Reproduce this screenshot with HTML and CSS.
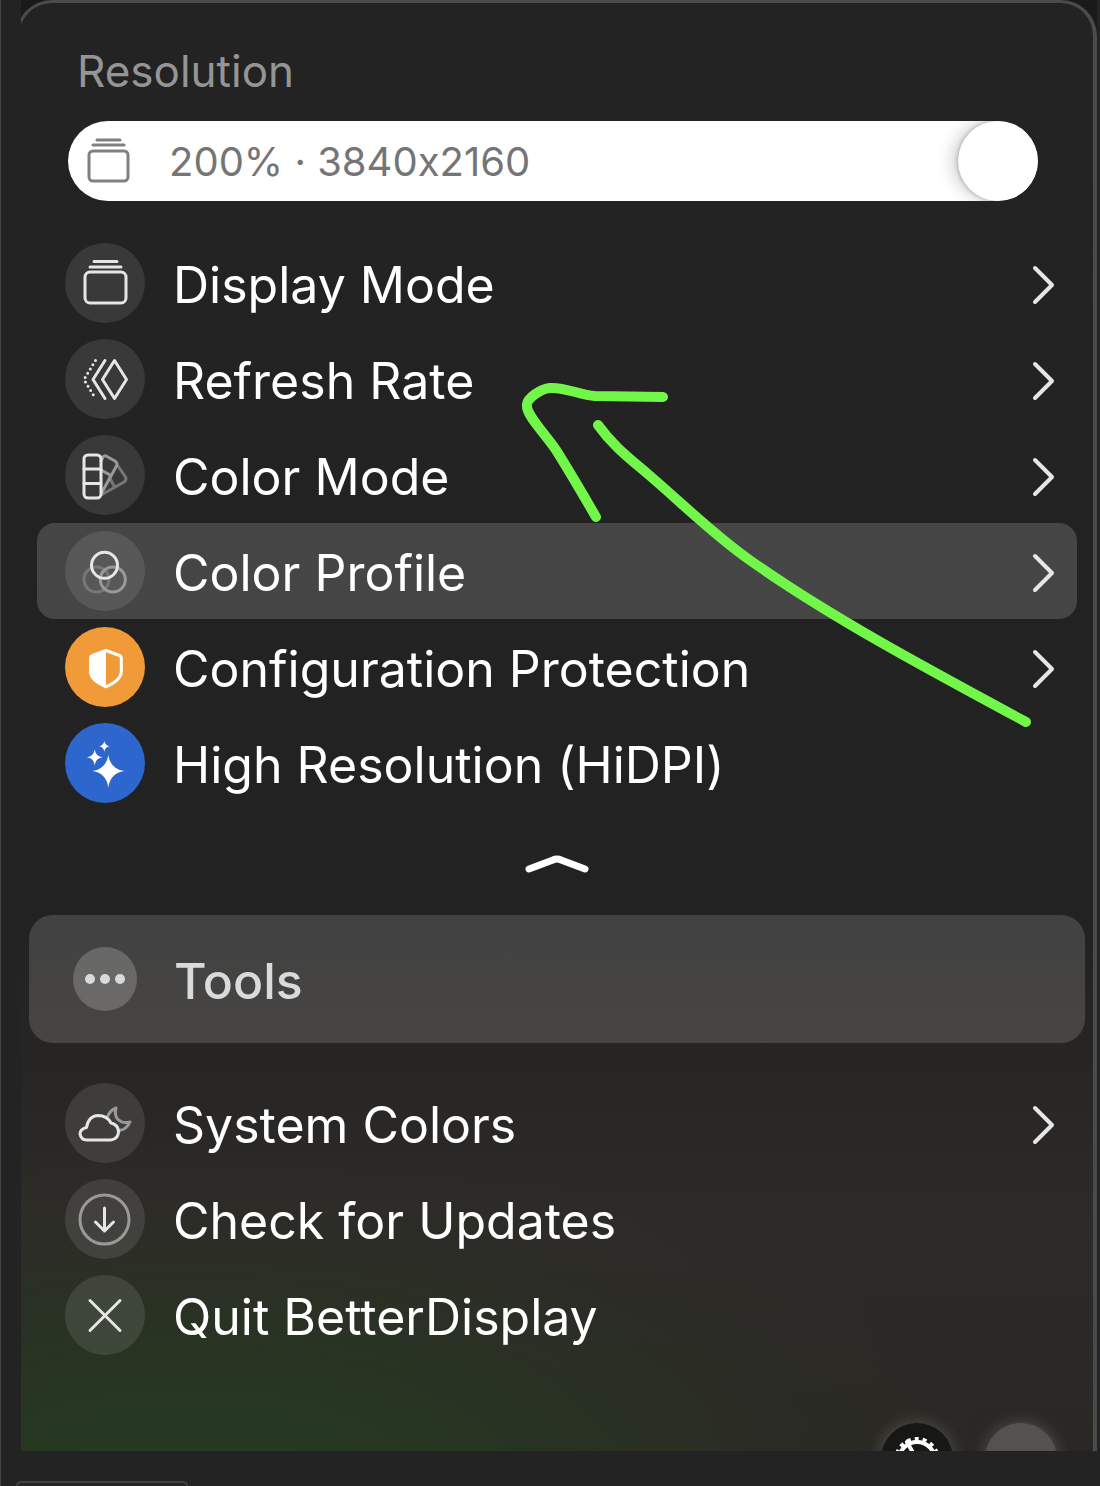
FILE: index.html
```
<!doctype html>
<html lang="en">

<head>
    <meta charset="UTF-8">
    <meta name="viewport" content="width=device-width, initial-scale=1">
    <title>BetterDisplay</title>
    <link rel="stylesheet" href="styles.css">
</head>

<body>
    <div class="page">
        <div class="frame">
            <main class="panel">
                <section class="resolution">
                    <label class="title" for="resolution">Resolution</label>
                    <div class="slider">
                        <input type="range" id="resolution" min="0" max="100" value="100">
                        <div class="slider_text">
                            <svg class="icon" viewBox="0 0 80 80">
                                <rect x="21" y="30" width="39" height="30" rx="4" />
                                <path d="M25 24H56M29 19H52" />
                            </svg>
                            <span>200% · 3840x2160</span>
                        </div>
                    </div>
                </section>

                <ul class="menu">
                    <li>
                        <button type="button" class="item">
                            <svg class="icon" viewBox="0 0 80 80">
                                <rect x="20" y="29" width="41" height="31" rx="5" />
                                <path d="M25 24H56M29 18.5H52" />
                            </svg>
                            <span>Display Mode</span>
                            <svg class="arrow" viewBox="0 0 24 40"><path d="M4 3L21 20L4 37" /></svg>
                        </button>
                    </li>
                    <li>
                        <button type="button" class="item">
                            <svg class="icon" viewBox="0 0 80 80">
                                <path d="M49.5 21.5L61.5 40.5L49.5 59.5L37.5 40.5Z" />
                                <path d="M40 21.5L28 40.5L40 59.5" />
                                <path class="dots" d="M30.5 21.5L19 40.5L30.5 59.5" />
                            </svg>
                            <span>Refresh Rate</span>
                            <svg class="arrow" viewBox="0 0 24 40"><path d="M4 3L21 20L4 37" /></svg>
                        </button>
                    </li>
                    <li>
                        <button type="button" class="item">
                            <svg class="icon" viewBox="0 0 80 80">
                                <path class="dimmer" d="M53 31L60.5 42Q62 45 59 47L37 59.5M44.5 42.5L49.5 52" />
                                <path class="dim" d="M36 26L38 22Q39 20 42 21.5L50 26Q53 28 51.5 31L36.5 58M36 35L46 40.5" />
                                <rect x="19" y="20" width="17" height="43" rx="4" />
                                <path d="M19 34H36M19 48.5H36" />
                            </svg>
                            <span>Color Mode</span>
                            <svg class="arrow" viewBox="0 0 24 40"><path d="M4 3L21 20L4 37" /></svg>
                        </button>
                    </li>
                    <li>
                        <button type="button" class="item active">
                            <svg class="icon" viewBox="0 0 80 80">
                                <circle class="dimmer" cx="31.5" cy="48.5" r="12.5" />
                                <circle class="dim" cx="47.8" cy="48.5" r="12.5" />
                                <circle cx="39.5" cy="34.3" r="13" />
                            </svg>
                            <span>Color Profile</span>
                            <svg class="arrow" viewBox="0 0 24 40"><path d="M4 3L21 20L4 37" /></svg>
                        </button>
                    </li>
                    <li>
                        <button type="button" class="item">
                            <svg class="icon orange" viewBox="0 0 80 80">
                                <path d="M41 23.5L54.5 28.5Q56.3 29.2 56.3 31V45Q56.3 53 41 59.8Q25.5 53 25.5 45V31Q25.5 29.2 27.3 28.5Z" />
                                <path class="fill" d="M41 22.5L26 28.2Q24.5 29 24.5 31V46Q25 53.5 41 60.5Z" />
                            </svg>
                            <span>Configuration Protection</span>
                            <svg class="arrow" viewBox="0 0 24 40"><path d="M4 3L21 20L4 37" /></svg>
                        </button>
                    </li>
                    <li>
                        <button type="button" class="item">
                            <svg class="icon blue" viewBox="0 0 80 80">
                                <path class="fill" d="M43.3 32Q45.3 46 59.3 48Q45.3 50 43.3 64.5Q41.3 50 27.5 48Q41.3 46 43.3 32Z" />
                                <path class="fill" d="M29.7 26.5Q30.7 33.3 37.5 34.3Q30.7 35.3 29.7 42.5Q28.7 35.3 22 34.3Q28.7 33.3 29.7 26.5Z" />
                                <path class="fill" d="M39.3 18Q40 22.6 44.8 23.3Q40 24 39.3 28.8Q38.6 24 34 23.3Q38.6 22.6 39.3 18Z" />
                            </svg>
                            <span>High Resolution (HiDPI)</span>
                        </button>
                    </li>
                </ul>

                <button type="button" class="collapse" aria-label="Collapse">
                    <svg viewBox="0 0 64 20"><path d="M4 15L28 6Q32 4 36 6L60 15" /></svg>
                </button>

                <button type="button" class="tools">
                    <svg class="icon" viewBox="0 0 64 64">
                        <circle cx="17" cy="32" r="5" />
                        <circle cx="32" cy="32" r="5" />
                        <circle cx="47" cy="32" r="5" />
                    </svg>
                    <span>Tools</span>
                </button>

                <ul class="menu">
                    <li>
                        <button type="button" class="item">
                            <svg class="icon" viewBox="0 0 80 80">
                                <path class="dim" d="M42.5 34Q44.5 27.5 51 25Q49 32 53 36.5Q58 41 65 39Q62 46 54.5 47.5" />
                                <path d="M22 57H46Q53.5 56 53.5 48.5Q53 41.5 46 40Q42 32.5 33 32.5Q23.5 33 21.5 44.5Q15 46 15 51Q16 57 22 57Z" />
                            </svg>
                            <span>System Colors</span>
                            <svg class="arrow" viewBox="0 0 24 40"><path d="M4 3L21 20L4 37" /></svg>
                        </button>
                    </li>
                    <li>
                        <button type="button" class="item">
                            <svg class="icon" viewBox="0 0 80 80">
                                <circle class="dim" cx="39.5" cy="40.5" r="24.5" />
                                <path d="M39.5 29V52M30.5 43L39.5 52L48.5 43" />
                            </svg>
                            <span>Check for Updates</span>
                        </button>
                    </li>
                    <li>
                        <button type="button" class="item">
                            <svg class="icon" viewBox="0 0 80 80">
                                <path d="M25 25.5L55 55.5M55 25.5L25 55.5" />
                            </svg>
                            <span>Quit BetterDisplay</span>
                        </button>
                    </li>
                </ul>

                <div class="bottom">
                    <button type="button" class="round dark" aria-label="Settings">
                        <svg viewBox="0 0 72 72">
                            <circle class="teeth" cx="36" cy="37" r="21" />
                            <circle cx="36" cy="37" r="18" />
                            <path d="M36 37L26 19M36 37H56M36 37L26 54" />
                        </svg>
                    </button>
                    <button type="button" class="round" aria-label="More"></button>
                </div>
            </main>
        </div>

        <div class="next_box"></div>

        <!-- hand drawn pointer -->
        <svg class="pointer" viewBox="0 0 520 350">
            <path d="M148 17L80 16C65 15 50 7 35 8C25 9 13 18 12 24C10 34 28 51 41 70C55 92 67 113 81 137" />
            <path d="M83 45C98 66 114 78 134 95C169 125 200 156 236 181C314 236 407 286 511 342" />
        </svg>
    </div>
</body>

</html>
```
FILE: styles.css
```
* {
    margin: 0;
    padding: 0;
    box-sizing: border-box;
}

body {
    background-color: #232323;
    color: #fff;
    font-family: Inter, "Liberation Sans", sans-serif;
    /* keeps the x in 3840x2160 a plain letter */
    font-feature-settings: "calt" 0;
}

li {
    list-style: none;
}

button {
    border: 0;
    background: none;
    color: inherit;
    font: inherit;
    font-feature-settings: inherit;
    text-align: left;
    cursor: pointer;
}

svg {
    display: block;
    flex: none;
    fill: none;
    stroke: #e6e6e6;
    stroke-width: 3;
    stroke-linecap: round;
    stroke-linejoin: round;
}

.page {
    position: relative;
    min-height: 100vh;
    padding: 0 3px 0 20px;
    border-left: 1px solid #444;
    overflow: hidden;
}

/* the window is cut a little on its left side */
.frame {
    overflow: hidden;
    background-color: #1a1a1a;
}

.panel {
    margin-left: -5px;
    padding: 43px 8px 0 10px;
    border: 4px solid #4b4b4b;
    border-top-width: 3px;
    border-left-width: 3px;
    border-bottom: 0;
    border-radius: 36px 36px 0 0;
    background:
        radial-gradient(ellipse 76% 24% at 16% 103%, #263b21 0%, rgba(38, 57, 33, .8) 35%, rgba(44, 50, 34, .3) 75%, transparent 100%),
        linear-gradient(#232323 0, #222 64%, #282624 74%, #2d2b29 84%, #2a2825 100%);
}

.resolution {
    padding: 0 47px 0 39px;
}

.title {
    display: block;
    padding-left: 9px;
    color: #959595;
    font-size: 44px;
    line-height: 50px;
}

.slider {
    display: grid;
    margin-top: 25px;
    border-radius: 40px;
    background-color: #fff;
    overflow: hidden;
}

.slider input,
.slider_text {
    grid-area: 1 / 1;
}

.slider input {
    width: 100%;
    height: 80px;
    appearance: none;
    -webkit-appearance: none;
    background: none;
}

.slider input::-webkit-slider-thumb {
    -webkit-appearance: none;
    width: 80px;
    height: 80px;
    border-radius: 50%;
    background-color: #fff;
    box-shadow: 0 0 4px rgba(0, 0, 0, .3), -6px 0 16px rgba(0, 0, 0, .18);
}

.slider_text {
    display: flex;
    align-items: center;
    gap: 21px;
    color: #757575;
    font-size: 40px;
    pointer-events: none;
}

.slider_text svg {
    width: 80px;
    height: 80px;
    stroke: #808080;
}

.menu {
    margin: 0 8px;
}

.resolution + .menu {
    margin-top: 34px;
}

.item {
    display: flex;
    align-items: center;
    gap: 28px;
    width: 100%;
    height: 96px;
    padding: 0 22px 0 28px;
    border-radius: 18px;
    font-size: 50px;
}

.item span {
    flex: 1;
    padding-top: 4px;
    line-height: 60px;
    white-space: nowrap;
}

.item:hover,
.active {
    background-color: rgba(255, 255, 255, .16);
}

.item .icon {
    width: 80px;
    height: 80px;
    border-radius: 50%;
    background-color: rgba(255, 255, 255, .1);
}

.item .orange {
    background-color: #f19a38;
    stroke: #fff;
}

.item .blue {
    background-color: #2d67cd;
}

.item .arrow {
    width: 24px;
    height: 44px;
    padding-top: 4px;
    stroke-width: 4;
}

svg .dim {
    stroke: #999;
}

svg .dimmer {
    stroke: #777;
}

.dots {
    stroke-dasharray: 0 5;
}

.fill {
    fill: #fff;
    stroke: none;
}

.collapse {
    display: block;
    margin: 43px auto 0;
}

.collapse svg {
    width: 64px;
    height: 20px;
    stroke: #fff;
    stroke-width: 7;
}

.tools {
    display: flex;
    align-items: center;
    gap: 37px;
    width: 100%;
    height: 128px;
    margin: 41px 0 32px;
    padding: 0 44px;
    border-radius: 24px;
    background-color: rgba(255, 255, 255, .15);
    color: #dadada;
    font-size: 50px;
    font-weight: 500;
}

.tools span {
    padding-top: 4px;
}

.tools .icon {
    width: 64px;
    height: 64px;
    border-radius: 50%;
    background-color: rgba(255, 255, 255, .2);
    fill: #dadada;
    stroke: none;
}

.bottom {
    display: flex;
    justify-content: flex-end;
    gap: 32px;
    height: 88px;
    padding: 60px 28px 0 0;
    overflow: hidden;
}

.round {
    flex: none;
    width: 72px;
    height: 72px;
    border-radius: 50%;
    background-color: #535251;
    box-shadow: 0 0 16px rgba(255, 255, 255, .2);
}

.dark {
    background-color: #171714;
}

.round svg {
    stroke: #fff;
    stroke-width: 4;
}

.round .teeth {
    stroke-dasharray: 4 4;
    stroke-linecap: butt;
}

.next_box {
    width: 172px;
    height: 5px;
    margin: 30px 0 0 -5px;
    border: 2px solid #404040;
    border-bottom: 0;
    border-radius: 8px 8px 0 0;
}

.pointer {
    position: absolute;
    top: 380px;
    left: 514px;
    width: 520px;
    height: 350px;
    stroke: #72f64a;
    stroke-width: 10;
    pointer-events: none;
}
```
